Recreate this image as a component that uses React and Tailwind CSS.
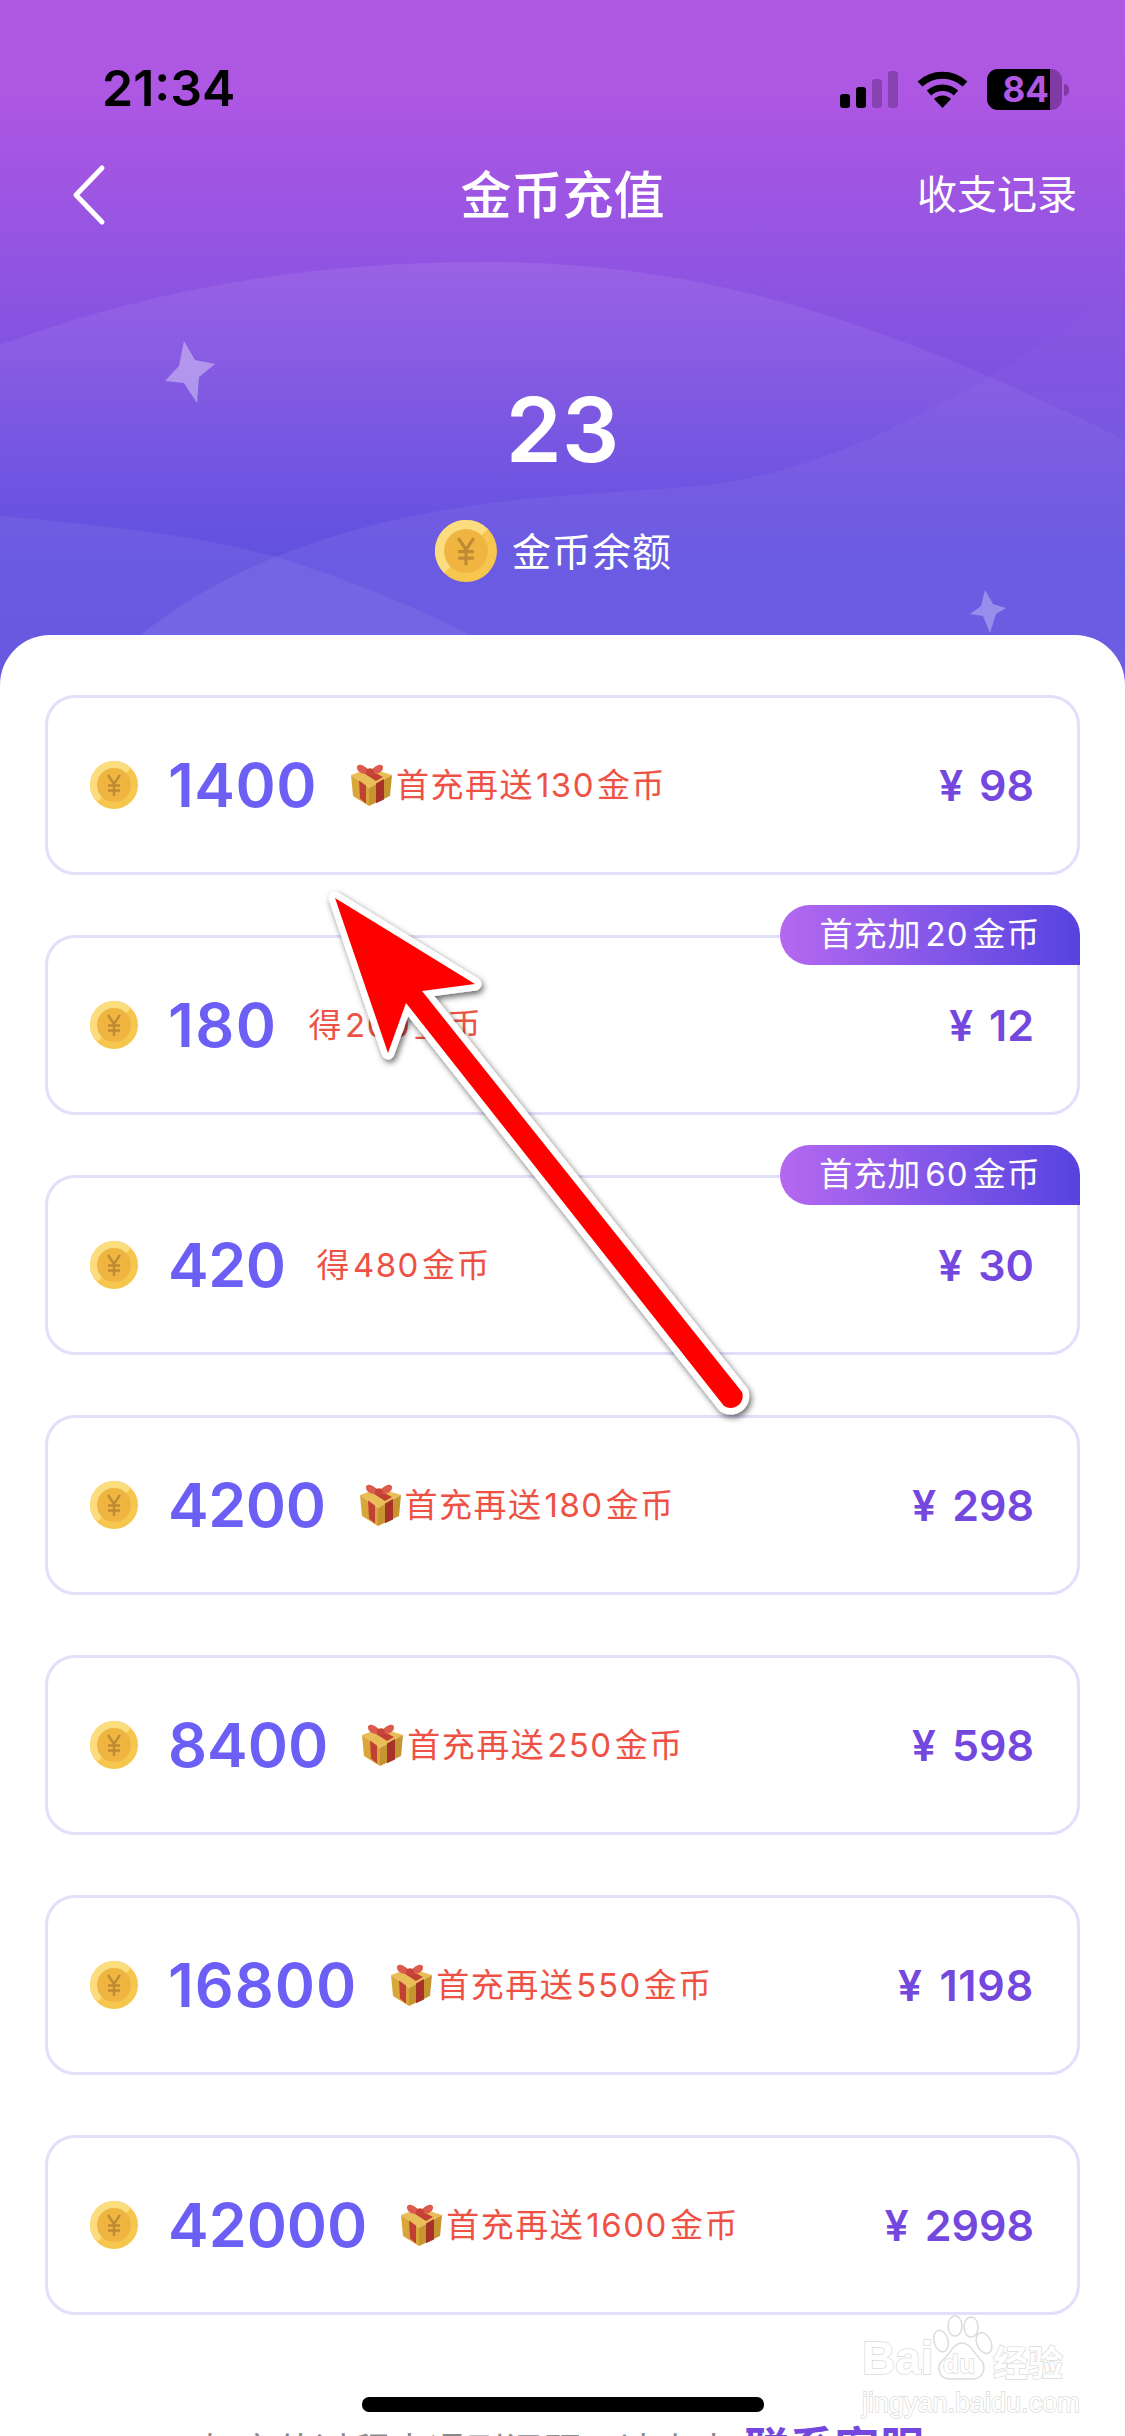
import React from "react";

const font = { fontFamily: '"Inter","Noto Sans CJK SC",sans-serif' };

function Coin({ size = 48 }) {
  return (
    <svg width={size} height={size} viewBox="0 0 48 48" className="shrink-0">
      <circle cx="24" cy="24" r="24" fill="#f6c64f" />
      <path d="M24 0a24 24 0 0 1 17 7L7 41A24 24 0 0 1 24 0Z" fill="#fbdc7f" />
      <circle cx="24" cy="24" r="17" fill="#efb540" />
      <path d="M18 14l6 9 6-9M24 23v12M18 24.500h12M18 29.500h12" fill="none" stroke="#bf8a34" strokeWidth="2.4" />
    </svg>
  );
}

function Gift() {
  return (
    <svg width="42" height="44" viewBox="0 0 42 44" className="shrink-0">
      <path d="M1 12L20 5l22 7-23 13Z" fill="#e9bd58" />
      <path d="M1 12l18 13v18L3 33Z" fill="#d9a63a" />
      <path d="M42 12L19 25v18l21-10Z" fill="#c6952f" />
      <path d="M9 7l7 -2 17 9-7 4Z" fill="#c23f33" />
      <path d="M9 17.500l7 5v18l-6-5Z" fill="#c23f33" />
      <path d="M26 20.500l8-4.500v20.500l-8 3.800Z" fill="#a8322a" />
      <path d="M20 9C14 0 6 0 7 5c.5 5 8 7 13 5ZM20 9c6-9 14-9 13-4-.5 5-8 7-13 5Z" fill="#dc5a4e" />
      <ellipse cx="20" cy="9" rx="4" ry="3.500" fill="#c8443a" />
    </svg>
  );
}

function Note({ pre, num, post }) {
  return (
    <span className="text-[33px] leading-none text-[#ee5245] tracking-[1.5px] whitespace-nowrap">
      {pre}
      <span className="mx-[2px]">{num}</span>
      {post}
    </span>
  );
}

function Card({ amount, amountCls, gift, pre, num, post, price, priceCls, tag }) {
  return (
    <div className="relative h-[180px] rounded-[30px] border-[3px] border-[#e2dffa] bg-white flex items-center pl-[42px] pr-[43px]">
      {tag && (
        <div className="absolute right-[-3px] top-[-33px] h-[60px] w-[300px] flex items-center justify-center rounded-tl-[30px] rounded-bl-[30px] rounded-tr-[30px] bg-gradient-to-r from-[#b568f0] to-[#5742e0] text-white text-[33px] tracking-[1px]">
          首充加<span className="mx-[4px]">{tag}</span>金币
        </div>
      )}
      <Coin />
      <span className={"ml-[30px] text-[61px] leading-none font-semibold text-[#6c5ff5] " + amountCls}>{amount}</span>
      <div className={gift ? "flex items-center gap-[4px] ml-[33px]" : "flex items-center ml-[31px]"}>
        {gift && <Gift />}
        <Note pre={pre} num={num} post={post} />
      </div>
      <span className={"ml-auto text-[43px] leading-none font-semibold text-[#7448df] " + priceCls}>
        ¥ <span className="ml-[5px]">{price}</span>
      </span>
    </div>
  );
}

const items = [
  { amount: "1400", amountCls: "tracking-[0.5px]", priceCls: "", gift: true, pre: "首充再送", num: "130", post: "金币", price: "98" },
  { amount: "180", amountCls: "tracking-[1.5px]", priceCls: "", pre: "得", num: "200", post: "金币", price: "12", tag: "20" },
  { amount: "420", amountCls: "tracking-[-0.5px]", priceCls: "", pre: "得", num: "480", post: "金币", price: "30", tag: "60" },
  { amount: "4200", amountCls: "tracking-[-0.4px]", priceCls: "", gift: true, pre: "首充再送", num: "180", post: "金币", price: "298" },
  { amount: "8400", amountCls: "", priceCls: "", gift: true, pre: "首充再送", num: "250", post: "金币", price: "598" },
  { amount: "16800", amountCls: "tracking-[1px]", priceCls: "tracking-[0.8px]", gift: true, pre: "首充再送", num: "550", post: "金币", price: "1198" },
  { amount: "42000", amountCls: "", priceCls: "", gift: true, pre: "首充再送", num: "1600", post: "金币", price: "2998" },
];

function Watermark() {
  const outline = "text-white [-webkit-text-stroke:1.5px_#dcdcdc] [paint-order:stroke_fill] leading-none whitespace-nowrap";
  return (
    <div className="absolute left-[862px] top-[2315px] w-[205px] pointer-events-none" style={{ fontFamily: '"Liberation Sans","Noto Sans CJK SC",sans-serif' }}>
      <div className="relative h-[66px]">
        <span className={"absolute left-0 bottom-0 text-[46px] font-bold " + outline}>Bai</span>
        <svg className="absolute left-[68px] top-0" width="64" height="66" viewBox="0 0 64 66">
          <g fill="#fff" stroke="#dcdcdc" strokeWidth="1.5">
            <ellipse cx="11" cy="26" rx="7" ry="11" transform="rotate(-15 11 26)" />
            <ellipse cx="25" cy="11" rx="7" ry="10" />
            <ellipse cx="41" cy="12" rx="7" ry="10" />
            <ellipse cx="54" cy="28" rx="7" ry="11" transform="rotate(-25 54 28)" />
            <path d="M32 28c8 0 12 10 18 16 8 8 3 20-8 20H20C10 64 4 52 14 44c6-5 9-16 18-16Z" />
          </g>
        </svg>
        <span className={"absolute left-[81px] bottom-[4px] text-[26px] font-bold " + outline}>du</span>
        <span className={"absolute left-[131px] bottom-0 text-[35px] font-bold " + outline}>经验</span>
      </div>
      <div className={"mt-[9px] text-[27px] " + outline}>jingyan.baidu.com</div>
    </div>
  );
}

export default function App() {
  return (
    <div style={font} className="relative w-[1125px] h-[2436px] overflow-hidden bg-white">
      <div className="relative h-[700px] bg-[linear-gradient(180deg,#ae58e4_0%,#ad57e3_14%,#5f4fe0_80%,#5f4fe0_100%)]">
        <svg className="absolute inset-0" width="1125" height="700" viewBox="0 0 1125 700">
          <defs>
            <linearGradient id="w1" x1="0" y1="0" x2="0" y2="1">
              <stop offset="0" stopColor="#fff" stopOpacity="0.08" />
              <stop offset="0.6" stopColor="#fff" stopOpacity="0.02" />
              <stop offset="1" stopColor="#fff" stopOpacity="0" />
            </linearGradient>
            <linearGradient id="w2" x1="0" y1="0" x2="0" y2="1">
              <stop offset="0" stopColor="#fff" stopOpacity="0" />
              <stop offset="0.5" stopColor="#fff" stopOpacity="0.05" />
              <stop offset="1" stopColor="#fff" stopOpacity="0.09" />
            </linearGradient>
          </defs>
          <path d="M0 345C160 285 320 262 488 262C720 262 900 330 1125 440V640H0Z" fill="url(#w1)" />
          <path d="M143 633C260 540 420 505 574 495C640 490 680 488 717 484C850 465 1000 380 1125 284V700H143Z" fill="url(#w2)" />
          <path d="M0 516C100 525 200 535 280 558C350 580 410 605 466 633V700H0Z" fill="#fff" fillOpacity="0.06" />
          <path d="M184 341L195 360L215 364L199 377L197 403L184 383L165 381L179 366Z" fill="#fff" fillOpacity="0.36" />
          <path d="M985 590L993 604L1006 608L996 614L990 633L983 616L970 614L981 606Z" fill="#fff" fillOpacity="0.3" />
        </svg>

        <div className="relative h-[132px] flex justify-between items-end pl-[102px] pr-[56px] pb-[19px]">
          <span className="text-[50px] leading-none font-semibold text-black">21:34</span>
          <div className="flex items-center gap-[19px] pb-[3px]">
            <svg width="58" height="37" viewBox="0 0 58 37">
              <rect x="0" y="23" width="10" height="14" rx="3" fill="#000" />
              <rect x="16" y="16" width="10" height="21" rx="3" fill="#000" />
              <rect x="32" y="8" width="10" height="29" rx="3" fill="#000" fillOpacity="0.22" />
              <rect x="48" y="0" width="10" height="37" rx="3" fill="#000" fillOpacity="0.22" />
            </svg>
            <svg width="51" height="37" viewBox="0 0 51 37">
              <path d="M3 13a33 33 0 0 1 45 0" fill="none" stroke="#000" strokeWidth="7" />
              <path d="M12 22a20 20 0 0 1 27 0" fill="none" stroke="#000" strokeWidth="6.500" />
              <path d="M17 28a12 12 0 0 1 17 0l-8.500 9Z" fill="#000" />
            </svg>
            <div className="relative flex items-center h-[41px] w-[82px]">
              <div className="h-full w-[75px] rounded-[11px] overflow-hidden flex bg-[#7f3ba3]">
                <div className="w-[63px] bg-black text-[#ae58e4] text-[35px] leading-[41px] font-bold text-right pr-[1px]">84</div>
              </div>
              <div className="ml-[2px] h-[12px] w-[5px] rounded-r-full bg-[#7f3ba3]"></div>
            </div>
          </div>
        </div>

        <div className="relative h-[126px] flex items-center justify-between pl-[70px] pr-[48px]">
          <svg width="38" height="62" viewBox="0 0 38 62">
            <path d="M32 4L6 31l26 27" fill="none" stroke="#fff" strokeWidth="5" strokeLinecap="round" strokeLinejoin="round" />
          </svg>
          <span className="absolute left-0 right-0 text-center text-[51px] leading-none text-white font-medium">金币充值</span>
          <span className="text-[40px] leading-none text-white">收支记录</span>
        </div>

        <div className="relative mt-[127px] text-center text-[90px] leading-none font-semibold text-white">23</div>
        <div className="relative mt-[45px] pr-[18px] flex items-center justify-center gap-[15px]">
          <Coin size={62} />
          <span className="text-[39px] tracking-[1px] leading-none text-white">金币余额</span>
        </div>
      </div>

      <div className="absolute left-0 right-0 top-[635px] rounded-t-[50px] bg-white px-[45px] pt-[60px]">
        <div className="flex flex-col gap-[60px]">
          {items.map((it) => (
            <Card key={it.amount} {...it} />
          ))}
        </div>
        <div className="mt-[111px] flex items-baseline justify-center text-[38px] leading-none text-[#8a8a8a] whitespace-nowrap">
          如充值过程中遇到问题，请点击
          <span className="ml-[12px] text-[45px] leading-none text-[#7448df] font-semibold">联系客服</span>
        </div>
      </div>

      <Watermark />

      <div className="absolute left-[362px] top-[2397px] h-[15px] w-[402px] rounded-[7px] bg-black"></div>

      <svg className="absolute left-0 top-0 pointer-events-none" width="1125" height="2436" viewBox="0 0 1125 2436">
        <defs>
          <filter id="s" x="-20%" y="-20%" width="140%" height="140%">
            <feDropShadow dx="2" dy="3" stdDeviation="3" floodColor="#000" floodOpacity="0.6" />
          </filter>
        </defs>
        <path
          d="M335 898L475 984L422 991L742 1392A12 12 0 0 1 724 1406L406 1003L388 1053Z"
          fill="#ff0000"
          stroke="#fff"
          strokeWidth="13"
          strokeLinejoin="round"
          paintOrder="stroke"
          filter="url(#s)"
        />
      </svg>
    </div>
  );
}
